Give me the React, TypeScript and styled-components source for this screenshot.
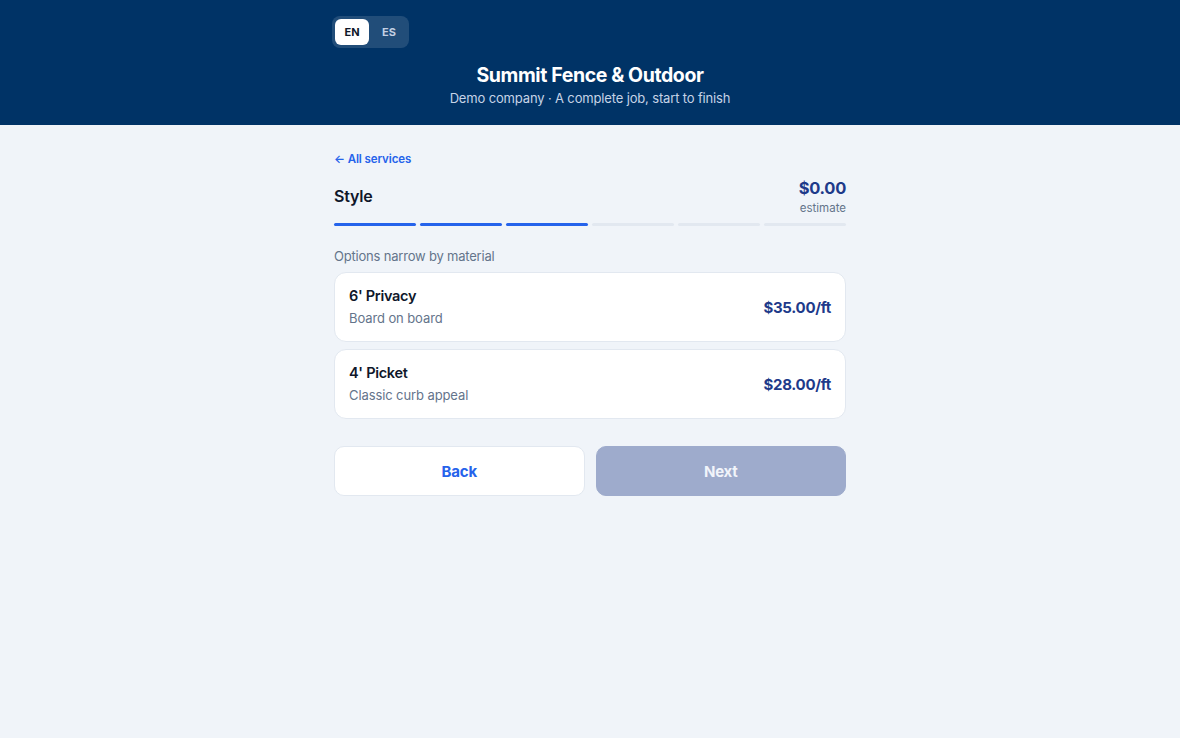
import React from 'react';
import styled, { createGlobalStyle } from 'styled-components';

const options = [
  { id: 'privacy', title: "6' Privacy", sub: 'Board on board', price: '$35.00/ft' },
  { id: 'picket', title: "4' Picket", sub: 'Classic curb appeal', price: '$28.00/ft' },
];

const steps = [true, true, true, false, false, false];

const App = () => {
  return (
    <>
      <GlobalStyle />
      <Header>
        <HeaderInner>
          <LangToggle>
            <LangBtn active>EN</LangBtn>
            <LangBtn>ES</LangBtn>
          </LangToggle>
          <Title>Summit Fence &amp; Outdoor</Title>
          <Subtitle>Demo company · A complete job, start to finish</Subtitle>
        </HeaderInner>
      </Header>

      <Main>
        <BackLink href="#">← All services</BackLink>
        <StepRow>
          <StepName>Style</StepName>
          <Estimate>
            <Total>$0.00</Total>
            <EstimateLabel>estimate</EstimateLabel>
          </Estimate>
        </StepRow>
        <Progress>
          {steps.map((done, i) => (
            <Segment key={i} done={done} />
          ))}
        </Progress>

        <Hint>Options narrow by material</Hint>
        <OptionList>
          {options.map((o) => (
            <OptionCard key={o.id}>
              <div>
                <OptionTitle>{o.title}</OptionTitle>
                <OptionSub>{o.sub}</OptionSub>
              </div>
              <Price>{o.price}</Price>
            </OptionCard>
          ))}
        </OptionList>

        <Actions>
          <Button>Back</Button>
          <Button primary disabled>Next</Button>
        </Actions>
      </Main>
    </>
  );
};

export default App;

const GlobalStyle = createGlobalStyle`
  html, body {
    margin: 0;
    background: #f0f4f9;
    font-family: Inter, "Noto Sans", "Liberation Sans", sans-serif;
    -webkit-font-smoothing: antialiased;
  }
  * { box-sizing: border-box; }
`;

const Header = styled.header`
  background: #003366;
  padding: 16px 0 18px;
`;

const HeaderInner = styled.div`
  width: 516px;
  margin: 0 auto;
  display: flex;
  flex-direction: column;
`;

const LangToggle = styled.div`
  align-self: flex-start;
  display: flex;
  gap: 3px;
  padding: 3px;
  border-radius: 8px;
  background: rgba(255, 255, 255, 0.13);
`;

const LangBtn = styled.button<{ active?: boolean }>`
  width: 34px;
  height: 26px;
  padding: 0;
  border: none;
  border-radius: 6px;
  font-family: inherit;
  font-size: 11px;
  font-weight: 700;
  background: ${(p) => (p.active ? '#ffffff' : 'transparent')};
  color: ${(p) => (p.active ? '#0f172a' : '#c3d0e3')};
  cursor: pointer;
`;

const Title = styled.h1`
  margin: 13px 0 0;
  text-align: center;
  color: #fff;
  font-size: 19.5px;
  line-height: 28px;
  font-weight: 700;
  letter-spacing: -0.4px;
`;

const Subtitle = styled.p`
  margin: 0;
  text-align: center;
  color: #c6d3e6;
  font-size: 13px;
  line-height: 18px;
  letter-spacing: -0.15px;
`;

const Main = styled.main`
  width: 512px;
  margin: 0 auto;
  padding-top: 26px;
  display: flex;
  flex-direction: column;
`;

const BackLink = styled.a`
  align-self: flex-start;
  color: #2563eb;
  font-size: 11.5px;
  line-height: 16px;
  font-weight: 600;
  letter-spacing: -0.1px;
  text-decoration: none;
`;

const StepRow = styled.div`
  margin-top: 9px;
  display: flex;
  align-items: center;
  justify-content: space-between;
`;

const StepName = styled.h2`
  margin: 0;
  font-size: 16px;
  line-height: 24px;
  font-weight: 600;
  letter-spacing: -0.2px;
  color: #0f172a;
`;

const Estimate = styled.div`
  display: flex;
  flex-direction: column;
  align-items: flex-end;
`;

const Total = styled.span`
  font-size: 16.5px;
  line-height: 24px;
  font-weight: 700;
  letter-spacing: -0.3px;
  color: #1e3a8a;
`;

const EstimateLabel = styled.span`
  font-size: 11.5px;
  line-height: 16px;
  color: #64748b;
`;

const Progress = styled.div`
  margin-top: 7px;
  display: grid;
  grid-template-columns: repeat(6, 1fr);
  gap: 4px;
`;

const Segment = styled.div<{ done?: boolean }>`
  height: 3px;
  border-radius: 2px;
  background: ${(p) => (p.done ? '#2563eb' : '#e2e8f0')};
`;

const Hint = styled.p`
  margin: 20px 0 0;
  font-size: 13px;
  line-height: 20px;
  letter-spacing: -0.2px;
  color: #64748b;
`;

const OptionList = styled.div`
  margin-top: 6px;
  display: flex;
  flex-direction: column;
  gap: 7px;
`;

const OptionCard = styled.div`
  height: 70px;
  padding: 0 14px;
  display: flex;
  align-items: center;
  justify-content: space-between;
  background: #fff;
  border: 1px solid #e2e8f0;
  border-radius: 12px;
  cursor: pointer;
`;

const OptionTitle = styled.div`
  font-size: 14.5px;
  line-height: 20px;
  font-weight: 600;
  letter-spacing: -0.3px;
  color: #0f172a;
`;

const OptionSub = styled.div`
  margin-top: 2px;
  font-size: 13px;
  line-height: 20px;
  letter-spacing: -0.1px;
  color: #64748b;
`;

const Price = styled.div`
  font-size: 15px;
  font-weight: 700;
  letter-spacing: -0.3px;
  color: #1e3a8a;
`;

const Actions = styled.div`
  margin-top: 27px;
  display: grid;
  grid-template-columns: 1fr 1fr;
  gap: 11px;
`;

const Button = styled.button<{ primary?: boolean }>`
  height: 50px;
  border-radius: 10px;
  font-family: inherit;
  font-size: 15px;
  font-weight: 700;
  letter-spacing: -0.2px;
  border: 1px solid ${(p) => (p.primary ? '#9eabcc' : '#e2e8f0')};
  background: ${(p) => (p.primary ? '#9eabcc' : '#fff')};
  color: ${(p) => (p.primary ? '#f1f4fa' : '#2563eb')};
  cursor: pointer;
`;
